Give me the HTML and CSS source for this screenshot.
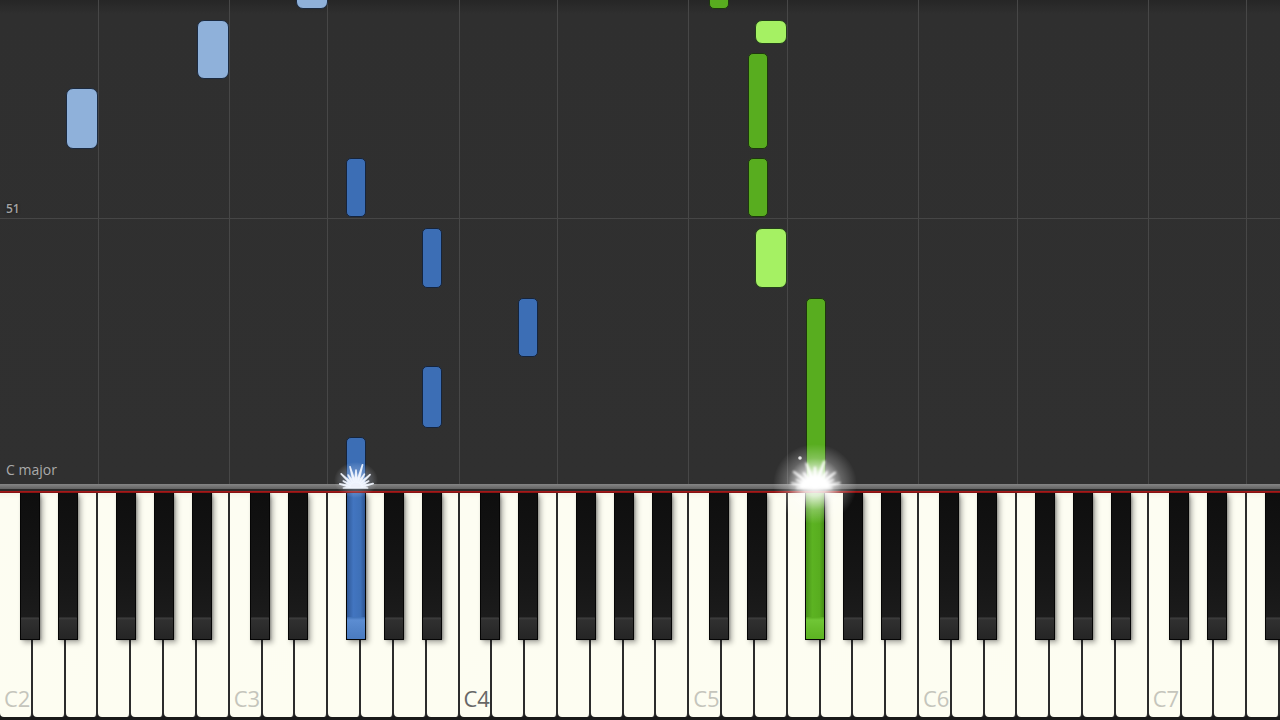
FILE: index.html
```html
<!DOCTYPE html>
<html>
<head>
<meta charset="utf-8">
<title>Piano roll</title>
<link rel="stylesheet" href="styles.css">
</head>
<body>
<div class="stage">
  <div class="roll">
    <div class="col c3"></div><div class="col c4"></div>
    <div class="col c3"></div><div class="col c4"></div>
    <div class="col c3"></div><div class="col c4"></div>
    <div class="col c3"></div><div class="col c4"></div>
    <div class="col c3"></div><div class="col c4"></div>
    <div class="col c3"></div><div class="col c1"></div>

    <div class="hline"></div>
    <span class="tag-num">51</span>
    <span class="tag-key">C major</span>

    <div class="note lh w" style="left:66px;top:88px;height:61px"></div>
    <div class="note lh w" style="left:197px;top:20px;height:59px"></div>
    <div class="note lh w" style="left:296px;top:-12px;height:21px"></div>
    <div class="note lh b" style="left:346px;top:158px;height:59px"></div>
    <div class="note lh b" style="left:422px;top:228px;height:60px"></div>
    <div class="note lh b" style="left:518px;top:298px;height:59px"></div>
    <div class="note lh b" style="left:422px;top:366px;height:62px"></div>
    <div class="note lh b" style="left:346px;top:437px;height:60px"></div>

    <div class="note rh b" style="left:709px;top:-12px;height:21px"></div>
    <div class="note rh w" style="left:755px;top:20px;height:24px"></div>
    <div class="note rh b" style="left:748px;top:53px;height:96px"></div>
    <div class="note rh b" style="left:748px;top:158px;height:59px"></div>
    <div class="note rh w" style="left:755px;top:228px;height:60px"></div>
    <div class="note rh b" style="left:806px;top:298px;height:200px"></div>
  </div>

  <div class="rail"></div>

  <div class="keys">
    <div class="oct full">
      <div class="wk"><span class="lbl">C2</span></div><div class="wk"></div><div class="wk"></div><div class="wk"></div><div class="wk"></div><div class="wk"></div><div class="wk"></div>
      <div class="bk cs"></div><div class="bk ds"></div><div class="bk fs"></div><div class="bk gs"></div><div class="bk as"></div>
    </div>
    <div class="oct full">
      <div class="wk"><span class="lbl">C3</span></div><div class="wk"></div><div class="wk"></div><div class="wk"></div><div class="wk"></div><div class="wk"></div><div class="wk"></div>
      <div class="bk cs"></div><div class="bk ds"></div><div class="bk fs on-blue"></div><div class="bk gs"></div><div class="bk as"></div>
    </div>
    <div class="oct full">
      <div class="wk"><span class="lbl mid">C4</span></div><div class="wk"></div><div class="wk"></div><div class="wk"></div><div class="wk"></div><div class="wk"></div><div class="wk"></div>
      <div class="bk cs"></div><div class="bk ds"></div><div class="bk fs"></div><div class="bk gs"></div><div class="bk as"></div>
    </div>
    <div class="oct full">
      <div class="wk"><span class="lbl">C5</span></div><div class="wk"></div><div class="wk"></div><div class="wk"></div><div class="wk"></div><div class="wk"></div><div class="wk"></div>
      <div class="bk cs"></div><div class="bk ds"></div><div class="bk fs on-green"></div><div class="bk gs"></div><div class="bk as"></div>
    </div>
    <div class="oct full">
      <div class="wk"><span class="lbl">C6</span></div><div class="wk"></div><div class="wk"></div><div class="wk"></div><div class="wk"></div><div class="wk"></div><div class="wk"></div>
      <div class="bk cs"></div><div class="bk ds"></div><div class="bk fs"></div><div class="bk gs"></div><div class="bk as"></div>
    </div>
    <div class="oct part">
      <div class="wk"><span class="lbl">C7</span></div><div class="wk"></div><div class="wk"></div><div class="wk"></div>
      <div class="bk cs"></div><div class="bk ds"></div><div class="bk fs"></div>
    </div>
  </div>

  <svg class="glow" width="1280" height="720" viewBox="0 0 1280 720">
    <defs>
      <radialGradient id="gGreen">
        <stop offset="0" stop-color="#ffffff" stop-opacity="1"/>
        <stop offset="0.3" stop-color="#ffffff" stop-opacity="0.8"/>
        <stop offset="0.65" stop-color="#ffffff" stop-opacity="0.25"/>
        <stop offset="1" stop-color="#ffffff" stop-opacity="0"/>
      </radialGradient>
      <radialGradient id="gBlue">
        <stop offset="0" stop-color="#e8f0ff" stop-opacity="0.7"/>
        <stop offset="0.5" stop-color="#b8ccf0" stop-opacity="0.3"/>
        <stop offset="1" stop-color="#ffffff" stop-opacity="0"/>
      </radialGradient>
      <filter id="soft" x="-50%" y="-50%" width="200%" height="200%">
        <feGaussianBlur stdDeviation="0.7"/>
      </filter>
      <polygon id="star" points="-12,0 -5.95,-0.8 -15.5,-4.1 -5.5,-2.3 -12.1,-7 -4.8,-3.7 -14.1,-14.1 -3.7,-4.8 -7.5,-13 -2.3,-5.5 -5.7,-21.3 -0.8,-5.9 0,-18 0.8,-5.9 6.2,-23.2 2.3,-5.5 8,-13.9 3.7,-4.8 13.4,-13.4 4.8,-3.7 12.1,-7 5.5,-2.3 16.4,-4.4 6,-0.8 11,0"/>
    </defs>
    <ellipse cx="356" cy="480" rx="22" ry="18" fill="url(#gBlue)"/>
    <use href="#star" transform="translate(356 488) scale(1.05 1.0)" fill="#f2f6ff" stroke="#f2f6ff" stroke-width="1.6" stroke-linejoin="round" fill-opacity="0.95" stroke-opacity="0.9" filter="url(#soft)"/>
    <ellipse cx="815" cy="484" rx="42" ry="40" fill="url(#gGreen)"/>
    <use href="#star" transform="translate(815 488) scale(1.5 1.15)" fill="#ffffff" stroke="#ffffff" stroke-width="1.4" stroke-linejoin="round" fill-opacity="0.95" filter="url(#soft)"/>
    <circle cx="800" cy="458" r="1.8" fill="#ffffff" fill-opacity="0.85"/>
  </svg>
</div>
</body>
</html>
```

FILE: styles.css
```css
* {
  box-sizing: border-box;
  margin: 0;
  padding: 0;
}

body {
  background: #1b1b1b;
  font-family: "Open Sans", "Noto Sans", sans-serif;
}

.stage {
  position: relative;
  width: 1280px;
  height: 720px;
  display: flex;
  flex-direction: column;
  overflow: hidden;
}

/* falling notes area */
.roll {
  position: relative;
  height: 484px;
  display: flex;
  background: linear-gradient(#262626 0, #2f2f2f 14px, #303030 100%);
  overflow: hidden;
}

.col {
  border-left: 1px solid #474747;
}

.col:first-child {
  border-left: none;
}

.c3 { flex: 3 1 0; }
.c4 { flex: 4 1 0; }
.c1 { flex: 1 1 0; }

.hline {
  position: absolute;
  left: 0;
  right: 0;
  top: 218px;
  height: 1px;
  background: #464646;
}

.tag-num {
  position: absolute;
  left: 6px;
  top: 202px;
  font-size: 12px;
  line-height: 14px;
  font-weight: 600;
  color: #a4a4a4;
  text-shadow: 0 0 3px #151515;
}

.tag-key {
  position: absolute;
  left: 6px;
  top: 461px;
  font-size: 14px;
  line-height: 18px;
  color: #aaaaaa;
}

.note {
  position: absolute;
  border: 1px solid;
  border-radius: 7px;
}

.note.w { width: 32px; }
.note.b { width: 20px; border-radius: 5px; }

.lh.w { background: #8fb1da; border-color: #1b2a40; }
.lh.b { background: #3c6eb5; border-color: #15243c; }
.rh.w { background: #a5f163; border-color: #23401a; }
.rh.b { background: #58ad1f; border-color: #1d380d; }

/* rail above keyboard */
.rail {
  position: relative;
  z-index: 2;
  height: 9px;
  background: linear-gradient(#858585 0, #626262 5px, #2a2a2a 5px, #2a2a2a 7px, #b01c1c 7px, #7c1010 9px);
}

/* keyboard */
.keys {
  flex: 1;
  display: flex;
  background: #1a1a1a;
}

.oct {
  position: relative;
  display: flex;
}

.oct.full { flex: 7 1 0; }
.oct.part { flex: 4 1 0; }

.wk {
  flex: 1 1 0;
  display: flex;
  align-items: flex-end;
  margin-bottom: 3px;
  padding: 0 0 8px 4px;
  background: linear-gradient(#f6f6ea 0, #fdfdf2 6px, #fdfdf1 100%);
  border-right: 2px solid #2c2c2c;
  border-radius: 0 0 4px 4px;
}

.lbl {
  font-size: 22px;
  line-height: 1;
  color: #c5c5bc;
}

.lbl.mid {
  color: #676767;
}

.bk {
  position: absolute;
  top: 0;
  width: 20px;
  height: 147px;
  background: linear-gradient(#0e0e0e 0, #161616 60%, #1f1f1f 100%);
  border: 1px solid #050505;
  border-top: none;
  box-shadow: 3px 3px 5px rgba(0, 0, 0, 0.3), 1px 0 2px rgba(0, 0, 0, 0.25);
}

.bk::after {
  content: "";
  position: absolute;
  left: 0;
  right: 0;
  bottom: 0;
  height: 22px;
  border-radius: 1px;
  background: linear-gradient(#1e1e1e 0, #3e3e3e 1px, #303030 3px, #2a2a2a 60%, #252525 100%);
}

.cs { left: 20px; }
.ds { left: 58px; }
.fs { left: 116px; }
.gs { left: 154px; }
.as { left: 192px; }

.bk.on-blue {
  background: linear-gradient(90deg, #2f5896 0, #4275c0 35%, #3e70b7 75%, #2d5492 100%);
}

.bk.on-blue::after {
  background: linear-gradient(#3e70b7 0, #5c8dd2 3px, #5283c8 60%, #4a7bc0 100%);
}

.bk.on-green {
  background: linear-gradient(90deg, #489219 0, #5cb322 35%, #58ad1f 75%, #458c16 100%);
}

.bk.on-green::after {
  background: linear-gradient(#58ad1f 0, #70c636 3px, #65bb2a 60%, #5cb322 100%);
}

.glow {
  position: absolute;
  left: 0;
  top: 0;
  z-index: 3;
  pointer-events: none;
}
```
